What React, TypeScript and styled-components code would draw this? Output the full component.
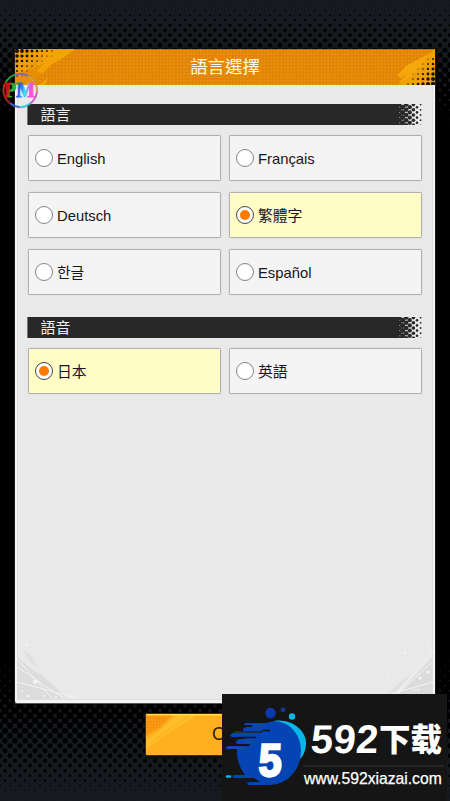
import React, { useState } from "react";
import styled, { createGlobalStyle } from "styled-components";

const GlobalStyle = createGlobalStyle`
  * { box-sizing: border-box; }
  html, body { margin: 0; background: #161a1f; }
`;

const sans = `"Liberation Sans", "Noto Sans CJK TC", "Noto Sans CJK KR", sans-serif`;

const Screen = styled.main`
  position: relative;
  width: 450px;
  height: 801px;
  overflow: hidden;
  padding-top: 49px;
  background: #161a1f;
  font-family: ${sans};
  display: flex;
  flex-direction: column;
  align-items: center;
`;

const Backdrop = styled.svg`
  position: absolute;
  inset: 0;
`;

const Panel = styled.section`
  position: relative;
  width: 422px;
  height: 655px;
  flex: none;
  display: flex;
  flex-direction: column;
  border: 1px solid #1b1b1b;
  border-top: 0;
  border-bottom-color: #555;
  border-radius: 0 0 3px 3px;
  background: #f5f5f5;
  box-shadow: 0 0 2px #000;
`;

const Header = styled.header`
  position: relative;
  height: 36px;
  flex: none;
  display: flex;
  align-items: flex-start;
  justify-content: center;
  border-top: 1px solid #b87008;
  background: #e18503;
`;

const HeaderArt = styled.svg`
  position: absolute;
  left: 0;
  top: -1px;
`;

const Title = styled.h1`
  position: relative;
  margin: 0;
  color: #fff8e8;
  font-family: "Noto Sans CJK TC", sans-serif;
  font-size: 17.4px;
  font-weight: 400;
  line-height: 31px;
`;

const Body = styled.div`
  position: relative;
  flex: 1;
  margin: 0 2px 3px;
  padding: 19px 9px 0;
  background: #e9e9e9;
  border: solid #dedede;
  border-width: 0 1px 1px;
`;

const Corners = styled.svg`
  position: absolute;
  left: -1px;
  bottom: 0;
`;

const Section = styled.section`
  position: relative;
  margin-bottom: 22px;
`;

const SectionBar = styled.div`
  display: flex;
  justify-content: space-between;
  width: 395px;
  height: 21px;
  margin-bottom: 10px;
`;

const SectionTitle = styled.h2`
  flex: 1;
  margin: 0;
  padding-left: 13.5px;
  background: #282828;
  box-shadow: inset 1px 0 #777;
  color: #eee;
  font-family: "Noto Sans CJK TC", sans-serif;
  font-size: 15px;
  font-weight: 400;
  line-height: 19px;
`;

const Options = styled.div`
  display: grid;
  grid-template-columns: 193px 193px;
  grid-auto-rows: 46px;
  gap: 11px 8px;
  margin-left: 1px;
`;

const Option = styled.button<{ $selected: boolean }>`
  display: flex;
  align-items: center;
  gap: 4px;
  padding: 0 6px;
  border: 1px solid #b0b0b0;
  border-radius: 1.5px;
  box-shadow: 0 0 1px #bbb;
  background: ${(p) => (p.$selected ? "#fffcc5" : "#f4f4f4")};
  color: #171524;
  font-family: ${sans};
  font-size: 14.8px;
  line-height: 20px;
  text-align: left;
`;

const Radio = styled.span<{ $selected: boolean }>`
  display: flex;
  align-items: center;
  justify-content: center;
  width: 18px;
  height: 18px;
  flex: none;
  border: 1.5px solid ${(p) => (p.$selected ? "#444" : "#858585")};
  border-radius: 50%;
  background: #fff;
  &::after {
    content: "";
    width: 10px;
    height: 10px;
    border-radius: 50%;
    background: ${(p) => (p.$selected ? "#ff7a00" : "transparent")};
  }
`;

const OptionLabel = styled.span`
  padding-top: 1px;
`;

const Confirm = styled.button`
  position: relative;
  width: 160px;
  height: 43px;
  flex: none;
  margin-top: 9px;
  padding: 0;
  border: 1px solid #4a2d08;
  border-radius: 2px;
  background: #ffb01e;
  box-shadow: inset 0 1px #ffe040, 0 3px 1px #101010;
  color: #241b0b;
  font-family: ${sans};
  font-size: 18px;
`;

const ConfirmArt = styled.svg`
  position: absolute;
  left: 0;
  top: 0;
`;

const ConfirmLabel = styled.span`
  position: relative;
`;

const Badge = styled.svg`
  position: absolute;
  left: 2px;
  top: 72px;
`;

const SiteMark = styled.aside`
  position: absolute;
  left: 222px;
  top: 694px;
  width: 225px;
  height: 107px;
  display: flex;
  background: #151515;
  color: #fff;
`;

const SiteArt = styled.svg`
  flex: none;
`;

const SiteText = styled.div`
  width: 141px;
  flex: none;
  margin-left: -7px;
  padding-top: 22px;
`;

const SiteName = styled.div`
  display: flex;
  align-items: flex-start;
  height: 51px;
  padding-left: 7px;
  border-bottom: 2px solid #252525;
  margin-bottom: 2px;
  white-space: nowrap;
`;

const Digits = styled.span`
  width: 69px;
  flex: none;
  padding-left: 1px;
  font: 700 40px/46px "Liberation Sans", sans-serif;
  letter-spacing: 0.4px;
  transform: skewX(-4deg);
`;

const Han = styled.span`
  font: 900 31.5px/43px "Noto Sans CJK SC", sans-serif;
`;

const SiteUrl = styled.div`
  padding-left: 1px;
  font: 15.7px/20px "Liberation Sans", sans-serif;
  -webkit-text-stroke: 0.25px #fff;
  white-space: nowrap;
`;

type Dot = { x: number; y: number; r: number };

const interpolate = (d: number, stops: number[][]) => {
  for (let i = 1; i < stops.length; i++) {
    const [a, ra] = stops[i - 1];
    const [b, rb] = stops[i];
    if (d <= b) return ra + ((d - a) / (b - a)) * (rb - ra);
  }
  return stops[stops.length - 1][1];
};

const halftone = (): Dot[] => {
  const dots: Dot[] = [];
  for (let row = 0; row < 27; row++) {
    const y = row * 5;
    const r = interpolate(y, [[0, 0.2], [45, 2.3], [80, 3.4], [130, 4.9]]);
    for (let x = row % 2 ? 5 : 0; x <= 455; x += 10) {
      dots.push({ x, y: y + 0.2, r });
    }
  }
  for (let row = 0; row < 32; row++) {
    const y = 800.7 - row * 5;
    const r = interpolate(row * 5, [[0, 0.2], [45, 2.3], [90, 3.5], [150, 4.9]]);
    for (let x = row % 2 ? 0 : 5; x <= 455; x += 10) dots.push({ x, y, r });
  }
  return dots;
};

const backdropDots = halftone().map((d) =>
  d.y < 140 ? { ...d, x: d.x - 5 } : d
);

const leftDots: Dot[] = [];
const rightDots: Dot[] = [];
for (let i = 0; i < 8; i++)
  for (let j = 0; j < 6; j++) {
    const left = 2.1 - i * 0.2 - j * 0.28;
    const right = 2.3 - i * 0.33 - j * 0.27;
    if (left > 0.4) leftDots.push({ x: 2 + i * 5, y: 2 + j * 5, r: left });
    if (right > 0.4) rightDots.push({ x: 418 - i * 5, y: 35 - j * 5, r: right });
  }

const SectionFade = () => (
  <svg width="24" height="21" viewBox="0 0 24 21">
    <rect width="1" height="21" fill="#282828" />
    {[2.5, 2.5, 2.3, 2.1, 1.8, 1.3, 0.9].map((r, c) =>
      Array.from({ length: 5 }, (_, k) => (
        <circle
          key={`${c}-${k}`}
          cx={1 + c * 3.6}
          cy={(c % 2 ? 3.2 : 0.6) + k * 5.2}
          r={r}
          fill="#282828"
        />
      ))
    )}
  </svg>
);

const languages = ["English", "Français", "Deutsch", "繁體字", "한글", "Español"];
const voices = ["日本", "英語"];

type ChoiceProps = {
  title: string;
  items: string[];
  value: string;
  onChange: (v: string) => void;
};

const Choice = ({ title, items, value, onChange }: ChoiceProps) => (
  <Section>
    <SectionBar>
      <SectionTitle>{title}</SectionTitle>
      <SectionFade />
    </SectionBar>
    <Options role="radiogroup">
      {items.map((item) => (
        <Option
          key={item}
          role="radio"
          aria-checked={item === value}
          $selected={item === value}
          onClick={() => onChange(item)}
        >
          <Radio $selected={item === value} />
          <OptionLabel>{item}</OptionLabel>
        </Option>
      ))}
    </Options>
  </Section>
);

export default function App() {
  const [language, setLanguage] = useState("繁體字");
  const [voice, setVoice] = useState("日本");

  return (
    <>
      <GlobalStyle />
      <Screen>
        <Backdrop width="450" height="801">
          <rect y="130" width="450" height="522" fill="#000" />
          {backdropDots.map((d, i) => (
            <circle key={i} cx={d.x} cy={d.y} r={d.r} />
          ))}
        </Backdrop>

        <Panel>
          <Header>
            <HeaderArt width="420" height="36">
              <defs>
                <pattern id="grain" width="3.35" height="3.35" patternUnits="userSpaceOnUse">
                  <circle cx="1.6" cy="1.6" r="0.75" fill="#f4a637" opacity="0.65" />
                </pattern>
              </defs>
              <rect width="420" height="36" fill="url(#grain)" />
              <path d="M0 0H60L48 9 35 17 25 26 19 36H0Z" fill="#ea9305" opacity=".7" />
              <path d="M34 0H60L48 9 37 15 28 24 22 22 30 14 16 20 25 11 31 3Z" fill="#f2a307" />
              <path d="M0 0H35L16 18 4 26 0 27Z" fill="#f3a306" opacity=".75" />
              <path d="M24 36L33 29 30 36Z" fill="#f2a307" />
              <path d="M420 0L398 20 383 36H420Z" fill="#f0a007" />
              <path d="M415 4L391 17 382 27 386 29 406 16ZM411 13L393 24 383 34 396 28Z" fill="#f4a80b" />
              {[...leftDots, ...rightDots].map((d, i) => (
                <circle key={i} cx={d.x} cy={d.y} r={d.r} fill="#17130b" />
              ))}
            </HeaderArt>
            <Title>語言選擇</Title>
          </Header>

          <Body>
            <Corners width="416" height="64">
              <g fill="#dcdcdc">
                <path d="M0 22L16 35 35 50 45 64H0Z" />
                <path d="M5 14L14 21 21 32 15 29ZM18 34L45 58 49 64 35 54Z" opacity=".8" />
                <path d="M416 22L395 44 377 64H416Z" />
                <path d="M387 43L394 40 373 64 367 62Z" opacity=".6" />
              </g>
              <g stroke="#f3f3f3" fill="none" strokeWidth="1">
                <path d="M0 24L36 64M0 32L45 62M0 47L60 63" />
                <path d="M416 16L377 62M416 26L380 60M416 47L374 59" />
              </g>
              <g fill="#f5f5f5">
                <circle cx="18" cy="47" r="2" />
                <circle cx="10" cy="10" r="1.4" />
                <circle cx="5" cy="56" r="1" />
                <circle cx="11" cy="61" r="1.2" />
                <circle cx="27" cy="61" r="1" />
                <circle cx="39" cy="62" r="1" />
                <circle cx="411" cy="37" r="1.5" />
                <circle cx="403" cy="43" r="1.5" />
                <circle cx="397" cy="55" r="1" />
                <circle cx="401" cy="55" r="1" />
                <circle cx="388" cy="18" r="1.2" />
                <circle cx="410" cy="8" r="1" />
                <circle cx="372" cy="42" r="1" />
                <circle cx="351" cy="31" r="1" />
              </g>
            </Corners>
            <Choice title="語言" items={languages} value={language} onChange={setLanguage} />
            <Choice title="語音" items={voices} value={voice} onChange={setVoice} />
          </Body>
        </Panel>

        <Confirm>
          <ConfirmArt width="158" height="41">
            <defs>
              <pattern id="buttonDots" width="3" height="3" patternUnits="userSpaceOnUse">
                <circle cx="1.5" cy="1.5" r="1" fill="#ee8208" opacity=".7" />
              </pattern>
            </defs>
            <path d="M0 1H27L14 14 0 22Z" fill="#f99a12" />
            <path d="M0 1H24L12 13 0 19Z" fill="url(#buttonDots)" />
            <path d="M31 1H52L35 11 23 18 12 27 0 35V26L16 14Z" fill="#ffbf2b" />
            <path d="M28 3L3 25M42 3L10 24M25 14L4 30" stroke="#ffb01e" />
            <path d="M0 1H158" stroke="#ffe03c" />
          </ConfirmArt>
          <ConfirmLabel>OK</ConfirmLabel>
        </Confirm>

        <Badge width="37" height="37" viewBox="0 0 37 37">
          <defs>
            <linearGradient id="letters" x1="0" x2="1" y1="0" y2="0.15">
              <stop offset="0" stopColor="#b80b08" />
              <stop offset=".2" stopColor="#c91710" />
              <stop offset=".32" stopColor="#22b52b" />
              <stop offset=".46" stopColor="#24a849" />
              <stop offset=".55" stopColor="#3154ff" />
              <stop offset=".75" stopColor="#35e6ef" />
              <stop offset=".88" stopColor="#f04bea" />
              <stop offset="1" stopColor="#ff55d5" />
            </linearGradient>
          </defs>
          <g fill="none" strokeWidth="1.7">
            <path d="M2 22A16.5 16.5 0 0 1 4 10" stroke="#d51d13" />
            <path d="M4 10A16.5 16.5 0 0 1 14 2.5" stroke="#17b62d" />
            <path d="M14 2.5A16.5 16.5 0 0 1 26 4" stroke="#7865c8" />
            <path d="M26 4A16.5 16.5 0 0 1 34.8 20" stroke="#d6a13f" />
            <path d="M34.8 20A16.5 16.5 0 0 1 28 31.5" stroke="#e64cda" />
            <path d="M28 31.5A16.5 16.5 0 0 1 18 35" stroke="#35cedc" />
            <path d="M18 35A16.5 16.5 0 0 1 8 31" stroke="#3b61df" />
            <path d="M8 31A16.5 16.5 0 0 1 2 22" stroke="#b91510" />
            <circle cx="18.3" cy="18.5" r="17.4" stroke="#777" strokeWidth=".4" />
          </g>
          <text
            x="2"
            y="25"
            textLength="31"
            lengthAdjust="spacingAndGlyphs"
            fontFamily="Liberation Serif, serif"
            fontWeight="700"
            fontSize="20"
            fill="url(#letters)"
            stroke="url(#letters)"
            strokeWidth="1"
          >
            PM
          </text>
        </Badge>

        <SiteMark>
          <SiteArt width="88" height="107" viewBox="0 0 88 107">
            <path d="M52 27C70 24 84 37 84 49C84 55 82 61 78 65Z" fill="#08b6e8" />
            <path
              d="M23 29H45C57 24 70 31 76 43C83 58 77 78 64 86C58 90 52 91 46 91H27Q23 90 27 88H38L32 84H13Q8 83 12 81H23C17 73 14 62 15 55H6Q1 54 6 52H26V50H15Q12 48 17 45H23L21 43H10Q6 41 11 39H40V37H22Q19 35 24 33H30V31H22Z"
              fill="#0545b3"
            />
            <path d="M40 36.5H48M34 43.5H17M28 51H14" stroke="#151515" strokeWidth="1.6" />
            <path d="M5 82.5H8" stroke="#08b6e8" strokeWidth="2.5" strokeLinecap="round" />
            <path d="M5 54H24M12 38H39M22 48H31" stroke="#345b87" strokeWidth=".7" />
            <circle cx="48.5" cy="19" r="5.2" fill="#0a3aae" />
            <circle cx="61" cy="16" r="2.4" fill="#163694" />
            <circle cx="70" cy="22.5" r="3.2" fill="#08b6e8" />
            <text
              x="36"
              y="82"
              fill="#fff"
              stroke="#fff"
              strokeWidth="2.4"
              fontFamily="Liberation Sans, sans-serif"
              fontWeight="700"
              fontSize="46"
              transform="translate(3 0) skewX(-2)"
              textLength="23"
              lengthAdjust="spacingAndGlyphs"
            >
              5
            </text>
          </SiteArt>
          <SiteText>
            <SiteName>
              <Digits>592</Digits>
              <Han>下载</Han>
            </SiteName>
            <SiteUrl>www.592xiazai.com</SiteUrl>
          </SiteText>
        </SiteMark>
      </Screen>
    </>
  );
}
